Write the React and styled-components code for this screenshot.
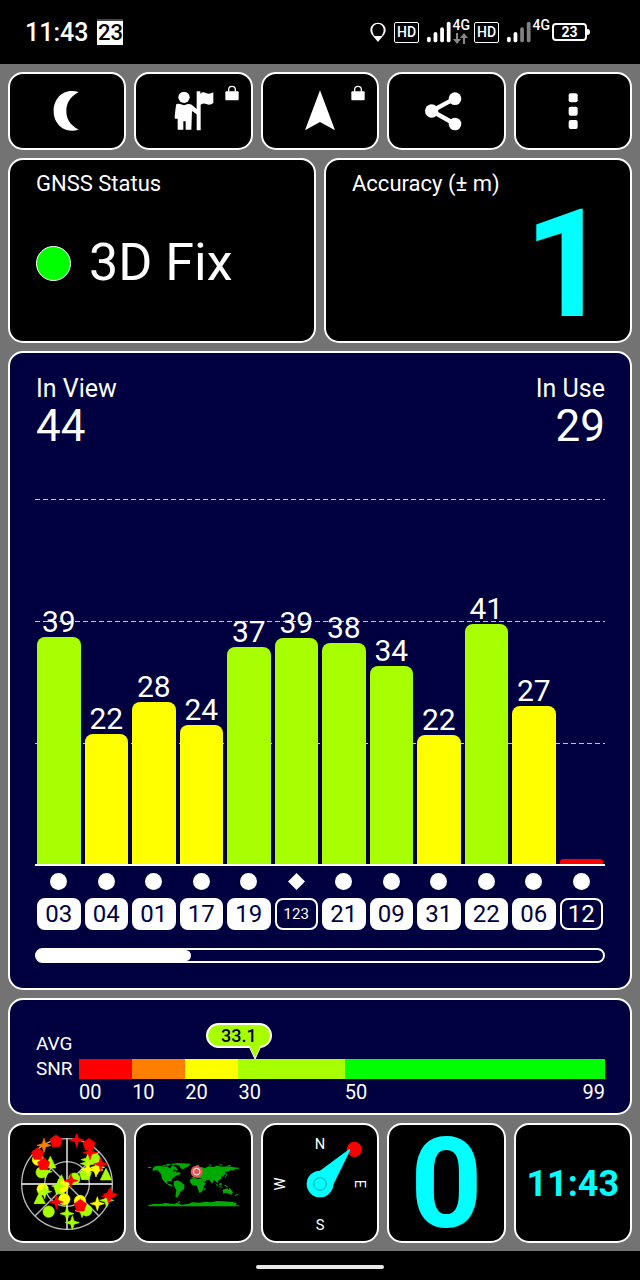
import React from "react";
import styled, { createGlobalStyle } from "styled-components";

const GlobalStyle = createGlobalStyle`
  * { box-sizing: border-box; }
  body {
    margin: 0;
    background: #000;
    color: #fff;
    font-family: Roboto, "Liberation Sans", sans-serif;
  }
  h2, p, ol { margin: 0; padding: 0; font-weight: 400; }
  ol { list-style: none; }
`;

const NAVY = "#000040";
const LIME = "#a8ff00";
const YELLOW = "#ffff00";
const RED = "#ff0000";
const GREEN = "#00ff00";
const CYAN = "#00ffff";

/* ---------- status bar ---------- */

const StatusBar = styled.header`
  display: flex;
  align-items: center;
  justify-content: space-between;
  height: 64px;
  padding: 0 50px 0 25px;
`;

const StatusGroup = styled.div`
  display: flex;
  align-items: center;
  gap: ${(p) => p.$gap}px;
`;

const Clock = styled.time`
  padding-top: 2px;
  font-size: 25px;
  font-weight: 500;
  line-height: 30px;
`;

const DateBadge = styled.span`
  width: 26px;
  height: 26px;
  border-top: 2px solid #444;
  background: #fff;
  color: #000;
  font-size: 22px;
  font-weight: 500;
  line-height: 24px;
  text-align: center;
`;

const HdBadge = styled.span`
  width: 25px;
  height: 21px;
  border: 1px solid #fff;
  border-radius: 2px;
  font-size: 14px;
  font-weight: 500;
  line-height: 19px;
  text-align: center;
`;

const Network = styled.span`
  display: flex;
  gap: 1px;
  width: 43px;
  height: 24px;
`;

const NetworkType = styled.span`
  display: flex;
  flex-direction: column;
  gap: 2px;
  font-size: 14px;
  font-weight: 500;
  line-height: 11px;
`;

const BatteryBox = styled.span`
  display: flex;
  align-items: center;
  &::after {
    content: "";
    width: 3px;
    height: 6px;
    border-radius: 0 3px 3px 0;
    background: #fff;
  }
`;

const BatteryLevel = styled.span`
  width: 35px;
  height: 18px;
  border: 2px solid #fff;
  border-radius: 4px;
  font-size: 14px;
  font-weight: 700;
  line-height: 15px;
  text-align: center;
`;

/* ---------- page ---------- */

const Main = styled.main`
  display: flex;
  flex-direction: column;
  gap: 8px;
  padding: 8px;
  background: #737373;
`;

const TileRow = styled.div`
  display: grid;
  grid-template-columns: repeat(${(p) => p.$columns}, minmax(0, 1fr));
  gap: 8px;
`;

const Tile = styled.button`
  position: relative;
  display: flex;
  align-items: center;
  justify-content: center;
  height: ${(p) => (p.$tall ? 120 : 78)}px;
  padding: ${(p) => (p.$tall ? "2px 0 0" : "0")};
  border: 2px solid #fff;
  border-radius: 15px;
  background: #000;
  color: ${CYAN};
  font-family: inherit;
  font-weight: 700;
  font-size: ${(p) => p.$size || 36}px;
  line-height: 1;
  cursor: pointer;
`;

const LockBadge = styled.svg`
  position: absolute;
  top: 11px;
  right: 12px;
`;

const Panel = styled.section`
  border: 2px solid #fff;
  border-radius: 15px;
  background: ${(p) => (p.$navy ? NAVY : "#000")};
`;

const InfoPanel = styled(Panel)`
  display: flex;
  flex-direction: column;
  height: 185px;
  padding: 11px 20px 9px 26px;
`;

const InfoTitle = styled.h2`
  font-size: 22px;
  line-height: 26px;
`;

const FixState = styled.p`
  display: flex;
  flex: 1;
  align-items: center;
  gap: 18px;
  padding-bottom: 3px;
  font-size: 52px;
  line-height: 60px;
`;

const FixLight = styled.span`
  width: 35px;
  height: 35px;
  border: 1px solid #fff;
  border-radius: 50%;
  background: ${GREEN};
`;

const AccuracyValue = styled.p`
  display: flex;
  flex: 1;
  align-items: center;
  justify-content: flex-end;
  color: ${CYAN};
  font-size: 150px;
  font-weight: 700;
  line-height: 110px;
`;

/* ---------- satellite chart ---------- */

const ChartPanel = styled(Panel)`
  padding: 22px 25px 25px;
`;

const Counts = styled.div`
  display: flex;
  justify-content: space-between;
  padding-left: 1px;
`;

const Count = styled.div`
  text-align: ${(p) => p.$align || "left"};
`;

const CountTitle = styled.h2`
  font-size: 25px;
  line-height: 28px;
`;

const CountValue = styled.p`
  font-size: 44px;
  line-height: 46px;
`;

const dashes = "repeating-linear-gradient(90deg, #c4c4d4 0 5px, transparent 5px 8px)";

const Plot = styled.ol`
  display: grid;
  grid-template-columns: repeat(12, minmax(0, 1fr));
  align-items: end;
  height: 417px;
  border-bottom: 2px solid #fff;
  background-image: ${dashes}, ${dashes}, ${dashes};
  background-size: 100% 1px;
  background-repeat: no-repeat;
  background-position: 0 50px, 0 172px, 0 294px;
`;

const PlotColumn = styled.li`
  padding: 0 2px;
  font-size: 30px;
  line-height: 30px;
  text-align: center;
`;

const Bar = styled.div`
  border-radius: ${(p) => (p.$low ? "3px 3px 0 0" : "8px 8px 0 0")};
  background: ${(p) => p.$color};
`;

const Satellites = styled.ol`
  display: grid;
  grid-template-columns: repeat(12, minmax(0, 1fr));
  padding: 7px 0 18px;
`;

const Satellite = styled.li`
  display: flex;
  flex-direction: column;
  align-items: center;
  gap: 8px;
  padding: 0 2px;
`;

const SatelliteId = styled.span`
  width: 100%;
  height: 32px;
  border: 2px solid #fff;
  border-radius: 8px;
  background: ${(p) => (p.$used ? "#fff" : NAVY)};
  color: ${(p) => (p.$used ? NAVY : "#fff")};
  font-size: ${(p) => (p.$small ? 15 : 24)}px;
  line-height: 29px;
  text-align: center;
`;

const ScrollTrack = styled.div`
  height: 15px;
  border: 2px solid #fff;
  border-radius: 8px;
`;

const ScrollFill = styled.div`
  height: 11px;
  border-radius: 0 6px 6px 0;
  background: #fff;
`;

/* ---------- average SNR ---------- */

const SnrPanel = styled(Panel)`
  display: flex;
  align-items: flex-end;
  gap: 5px;
  height: 117px;
  padding: 0 25px 8px 26px;
`;

const SnrTitle = styled.h2`
  width: 38px;
  padding-bottom: 24px;
  font-size: 19px;
  line-height: 25px;
`;

const SnrGauge = styled.div`
  flex: 1;
`;

const SnrMarker = styled.output`
  display: flex;
  flex-direction: column;
  width: 66px;
  margin-bottom: -1px;
`;

const SnrBubble = styled.span`
  height: 25px;
  border: 2px solid #fff;
  border-radius: 13px;
  background: ${LIME};
  color: ${NAVY};
  font-size: 18px;
  font-weight: 500;
  line-height: 21px;
  text-align: center;
`;

const SnrTail = styled.svg`
  align-self: flex-end;
  margin: -2px 10px 0 0;
`;

const scaleColumns = "10fr 10fr 10fr 20fr 49fr";

const SnrScale = styled.div`
  display: grid;
  grid-template-columns: ${scaleColumns};
  height: 20px;
`;

const SnrZone = styled.span`
  background: ${(p) => p.$color};
`;

const SnrTicks = styled.div`
  display: grid;
  grid-template-columns: ${scaleColumns};
  font-size: 20px;
  line-height: 26px;
`;

const SnrTick = styled.span`
  display: flex;
  justify-content: space-between;
`;

/* ---------- navigation bar ---------- */

const NavBar = styled.footer`
  display: flex;
  justify-content: center;
  height: 29px;
  padding-top: 14px;
`;

const NavPill = styled.span`
  width: 20%;
  height: 4px;
  border-radius: 2px;
  background: #e8e8e8;
`;

/* ---------- icons ---------- */

const Lock = () => (
  <LockBadge width="14" height="16" viewBox="0 0 42 48" fill="#fff" aria-hidden="true">
    <path d="M11 20v-6a10 10 0 0 1 20 0v6" fill="none" stroke="#fff" strokeWidth="4" />
    <rect x="1" y="19" width="40" height="27" rx="3" />
  </LockBadge>
);

const Signal = ({ level }) => (
  <svg width="26" height="24" viewBox="0 0 26 24" aria-hidden="true">
    {[[0, 17], [7, 12], [14, 7], [21, 1]].map(([x, y], i) => (
      <rect key={x} x={x} y={y} width="4" height={23 - y} rx="2" fill={i < level ? "#fff" : "#808080"} />
    ))}
  </svg>
);

const Moon = () => (
  <svg width="50" height="50" viewBox="126 258 150 150" fill="#fff" aria-hidden="true">
    <path d="M236 276C187 262 160 300 161 333C160 368 190 403 236 389C208 374 199 354 199 333C199 311 209 291 236 276Z" />
  </svg>
);

const Guide = () => (
  <svg width="50" height="50" viewBox="506 258 150 150" fill="#fff" aria-hidden="true">
    <circle cx="551" cy="292" r="17" />
    <path d="M528 312Q536 310 542 313Q551 318 560 313Q567 311 574 314L589 327V274H600V281Q608 273 618 280Q628 284 639 277V309Q629 317 618 312Q609 308 601 314V391H589V343L575 333L573 389H556V364H549V389H532V356H524L523 351Q526 320 528 312Z" />
  </svg>
);

const Arrow = () => (
  <svg width="50" height="50" viewBox="885 258 150 150" fill="#fff" aria-hidden="true">
    <path d="M960 271L1005 391L960 366L915 391Z" />
  </svg>
);

const Share = () => (
  <svg width="50" height="50" viewBox="303 258 150 150" fill="#fff" aria-hidden="true">
    <path d="M405 295L335 333L405 372" fill="none" stroke="#fff" strokeWidth="13" />
    <circle cx="335" cy="333" r="20" />
    <circle cx="405" cy="296" r="19" />
    <circle cx="405" cy="372" r="19" />
  </svg>
);

const Dots = () => (
  <svg width="50" height="50" viewBox="683 258 150 150" fill="#fff" aria-hidden="true">
    <rect x="745" y="280" width="27" height="27" rx="6" />
    <rect x="745" y="320" width="27" height="27" rx="6" />
    <rect x="745" y="360" width="27" height="27" rx="6" />
  </svg>
);

const shapes = {
  circle: <circle r="17" />,
  star: <path d="M0-21L5-5L21 0L5 5L0 21L-5 5L-21 0L-5-5Z" />,
  pentagon: <path d="M0-18L18-5L11 17H-11L-18-5Z" />,
  triangle: <path d="M0-19L17 16H-17Z" />,
};

const sky = [
  ["circle", LIME, 125, 170], ["circle", YELLOW, 114, 132], ["star", "#ff8000", 132, 89],
  ["pentagon", RED, 168, 76], ["pentagon", RED, 113, 114], ["triangle", LIME, 151, 141],
  ["star", LIME, 136, 168], ["pentagon", RED, 131, 145], ["star", RED, 230, 73],
  ["pentagon", RED, 267, 86], ["circle", LIME, 283, 129], ["star", LIME, 264, 132],
  ["star", LIME, 262, 144], ["star", RED, 270, 111], ["pentagon", LIME, 256, 175],
  ["star", YELLOW, 264, 161], ["star", YELLOW, 288, 163], ["star", YELLOW, 293, 155],
  ["star", RED, 302, 145], ["triangle", LIME, 318, 177], ["circle", LIME, 223, 189],
  ["triangle", LIME, 184, 196], ["pentagon", LIME, 180, 218], ["circle", YELLOW, 188, 213],
  ["star", LIME, 176, 211], ["star", RED, 213, 195], ["circle", YELLOW, 128, 221],
  ["star", LIME, 134, 228], ["triangle", LIME, 119, 248], ["circle", YELLOW, 193, 251],
  ["star", RED, 169, 259], ["circle", LIME, 146, 288], ["star", LIME, 201, 294],
  ["star", LIME, 217, 321], ["circle", YELLOW, 240, 256], ["circle", LIME, 259, 284],
  ["star", LIME, 246, 285], ["pentagon", RED, 241, 269], ["star", YELLOW, 292, 264],
  ["star", LIME, 320, 254], ["star", RED, 326, 242], ["star", RED, 331, 236],
];

const SkyView = () => (
  <svg width="100" height="100" viewBox="51 55 300 300" aria-hidden="true">
    <g fill="none" stroke="#bbb" strokeWidth="4">
      <circle cx="201" cy="205" r="136" />
      <circle cx="201" cy="205" r="67" />
      <path d="M105 109L297 301M297 109L105 301" />
      <path d="M65 205H337M201 69V341" stroke="#fff" />
    </g>
    {sky.map(([shape, color, x, y], i) => (
      <g key={i} fill={color} stroke={color} strokeWidth="2" transform={`translate(${x} ${y})`}>{shapes[shape]}</g>
    ))}
  </svg>
);

const WorldMap = () => (
  <svg width="100" height="100" viewBox="431 55 300 300" fill="#00aa00" aria-hidden="true">
    <path d="M457 160L463 152L478 150L490 153L500 152L508 157L517 153L526 155L533 162L527 165L522 160L518 168L526 166L530 171L537 169L542 175L532 179L526 181L518 187L513 192L516 199L511 196L500 196L501 204L510 205L517 211L520 213L511 212L498 204L490 196L484 187L483 177L474 165L466 163L457 167Z" />
    <path d="M484 150L495 147L504 144L512 146L503 151L497 149L490 153ZM509 152L520 151L531 157L524 157ZM512 145L532 142L570 144L566 152L557 155L548 161L541 158L537 150L528 147L516 148ZM443 154H453V157H443Z" />
    <path d="M522 196L530 197L536 200L530 200L521 198ZM520 198L532 194L543 200L553 208L550 222L540 229L535 238L531 246L525 244L528 224L521 210Z" />
    <path d="M571 186L579 184L580 177L588 172L596 169L594 160L604 154L614 158L624 152L638 154L651 150L667 153L686 152L700 155L717 156L716 159L704 160L701 165L693 163L681 168L674 168L677 174L671 178L669 184L664 181L662 189L654 195L652 203L645 197L641 193L635 204L627 193L619 193L614 199L608 198L604 189L593 187L586 184L578 188Z" />
    <path d="M570 190L582 187L594 190L604 190L609 199L617 202L611 211L609 221L603 230L597 232L592 218L589 210L576 208L569 200ZM614 216L617 219L613 225L611 221ZM644 202L651 206L656 213L652 212ZM658 202L665 203L662 211L656 208ZM669 207L677 209L684 214L677 213ZM667 222L675 219L681 218L684 222L688 217L694 224L698 231L693 237L685 234L677 231L669 234ZM710 234L714 236L705 242L703 241ZM656 212L667 214V216L657 215ZM677 173L681 178L674 187L672 185L677 180Z" />
    <path d="M575 164L580 164L582 173L576 174ZM587 149L598 147L596 151H588ZM626 145L634 148L629 151ZM657 146H665V149H657ZM682 149H692V151H682Z" />
    <path d="M444 272V268L462 264L481 265L495 262L520 265L532 261L536 256L540 257L534 264L545 267L566 264L575 260L596 261L615 258L633 260L650 256L670 257L698 259L710 263L706 269L717 269V272Z" />
    <circle cx="589" cy="168" r="18" fill="#e95555" />
    <circle cx="589" cy="168" r="10" fill="none" stroke="#fff" strokeWidth="3" />
  </svg>
);

const CompassText = styled.text`
  fill: #fff;
  font-size: 44px;
  font-weight: 400;
  text-anchor: middle;
`;

const Compass = () => (
  <svg width="100" height="100" viewBox="45 55 300 300">
    <CompassText x="195" y="100">N</CompassText>
    <CompassText x="195" y="343">S</CompassText>
    <CompassText transform="translate(300 205) rotate(90)">E</CompassText>
    <CompassText transform="translate(91 205) rotate(-90)">W</CompassText>
    <circle cx="298" cy="101" r="23" fill={RED} />
    <path d="M195 165L283 100L286 103L233 211Z" fill={CYAN} />
    <circle cx="195" cy="205" r="40" fill={CYAN} />
    <circle cx="195" cy="205" r="19" fill="none" stroke="#00a6a6" strokeWidth="3" />
  </svg>
);

/* ---------- data ---------- */

const satellites = [
  { id: "03", snr: 39, height: 227, used: true },
  { id: "04", snr: 22, height: 130, used: true },
  { id: "01", snr: 28, height: 162, used: true },
  { id: "17", snr: 24, height: 139, used: true },
  { id: "19", snr: 37, height: 217, used: true },
  { id: "123", snr: 39, height: 226, diamond: true },
  { id: "21", snr: 38, height: 221, used: true },
  { id: "09", snr: 34, height: 198, used: true },
  { id: "31", snr: 22, height: 129, used: true },
  { id: "22", snr: 41, height: 240, used: true },
  { id: "06", snr: 27, height: 158, used: true },
  { id: "12", snr: null, height: 5 },
];

const barColor = (snr) => (snr === null ? RED : snr < 30 ? YELLOW : LIME);

const tools = [
  { name: "Night mode", Icon: Moon },
  { name: "Guide", Icon: Guide, locked: true },
  { name: "Navigate", Icon: Arrow, locked: true },
  { name: "Share", Icon: Share },
  { name: "More", Icon: Dots },
];

const AVERAGE = 33.1;

export default function App() {
  return (
    <>
      <GlobalStyle />
      <StatusBar>
        <StatusGroup $gap={9}>
          <Clock>11:43</Clock>
          <DateBadge>23</DateBadge>
        </StatusGroup>
        <StatusGroup $gap={8}>
          <svg width="16" height="20" viewBox="0 0 48 60" aria-hidden="true">
            <path d="M24 2C10 2 1 12 1 24C1 38 15 47 24 60C33 47 47 38 47 24C47 12 38 2 24 2ZM24 6C34 6 41 14 41 24C41 32 36 40 34 42H14C12 40 7 32 7 24C7 14 14 6 24 6Z" fill="#fff" fillRule="evenodd" />
          </svg>
          <HdBadge>HD</HdBadge>
          <StatusGroup $gap={4}>
            <Network>
              <Signal level={4} />
              <NetworkType>
                4G
                <svg width="15" height="11" viewBox="0 0 15 11" fill="#888" aria-hidden="true">
                  <path d="M3 0H5V6H8L4 11L0 6H3ZM10 11H12V5H15L11 0L7 5H10Z" />
                </svg>
              </NetworkType>
            </Network>
            <HdBadge>HD</HdBadge>
          </StatusGroup>
          <StatusGroup $gap={2}>
            <Network>
              <Signal level={2} />
              <NetworkType>4G</NetworkType>
            </Network>
            <BatteryBox>
              <BatteryLevel>23</BatteryLevel>
            </BatteryBox>
          </StatusGroup>
        </StatusGroup>
      </StatusBar>

      <Main>
        <TileRow $columns={5}>
          {tools.map(({ name, Icon, locked }) => (
            <Tile key={name} type="button" aria-label={name}>
              <Icon />
              {locked && <Lock />}
            </Tile>
          ))}
        </TileRow>

        <TileRow $columns={2}>
          <InfoPanel>
            <InfoTitle>GNSS Status</InfoTitle>
            <FixState>
              <FixLight />
              3D Fix
            </FixState>
          </InfoPanel>
          <InfoPanel>
            <InfoTitle>Accuracy (± m)</InfoTitle>
            <AccuracyValue>1</AccuracyValue>
          </InfoPanel>
        </TileRow>

        <ChartPanel $navy>
          <Counts>
            <Count>
              <CountTitle>In View</CountTitle>
              <CountValue>44</CountValue>
            </Count>
            <Count $align="right">
              <CountTitle>In Use</CountTitle>
              <CountValue>29</CountValue>
            </Count>
          </Counts>
          <Plot>
            {satellites.map((s) => (
              <PlotColumn key={s.id}>
                {s.snr}
                <Bar $color={barColor(s.snr)} $low={s.snr === null} style={{ height: s.height }} />
              </PlotColumn>
            ))}
          </Plot>
          <Satellites>
            {satellites.map((s) => (
              <Satellite key={s.id}>
                <svg width="17" height="17" viewBox="0 0 17 17" fill="#fff" aria-hidden="true">
                  {s.diamond ? <path d="M8.5 0L17 8.5L8.5 17L0 8.5Z" /> : <circle cx="8.5" cy="8.5" r="8.5" />}
                </svg>
                <SatelliteId $used={s.used} $small={s.id.length > 2}>{s.id}</SatelliteId>
              </Satellite>
            ))}
          </Satellites>
          <ScrollTrack>
            <ScrollFill style={{ width: `${(12 / 44) * 100}%` }} />
          </ScrollTrack>
        </ChartPanel>

        <SnrPanel $navy>
          <SnrTitle>AVG SNR</SnrTitle>
          <SnrGauge>
            <SnrMarker style={{ marginLeft: `calc(${(AVERAGE / 99) * 100}% - 49px)` }}>
              <SnrBubble>{AVERAGE}</SnrBubble>
              <SnrTail width="14" height="14" viewBox="0 0 14 14" aria-hidden="true">
                <path d="M1 0L7 13L13 0" fill={LIME} stroke="#fff" strokeWidth="1" />
              </SnrTail>
            </SnrMarker>
            <SnrScale>
              {[RED, "#ff8000", YELLOW, LIME, GREEN].map((c) => (
                <SnrZone key={c} $color={c} />
              ))}
            </SnrScale>
            <SnrTicks>
              <SnrTick>00</SnrTick>
              <SnrTick>10</SnrTick>
              <SnrTick>20</SnrTick>
              <SnrTick>30</SnrTick>
              <SnrTick>
                <span>50</span>
                <span>99</span>
              </SnrTick>
            </SnrTicks>
          </SnrGauge>
        </SnrPanel>

        <TileRow $columns={5}>
          <Tile $tall type="button" aria-label="Sky view"><SkyView /></Tile>
          <Tile $tall type="button" aria-label="World map"><WorldMap /></Tile>
          <Tile $tall type="button" aria-label="Compass"><Compass /></Tile>
          <Tile $tall $size={126} type="button">0</Tile>
          <Tile $tall type="button">11:43</Tile>
        </TileRow>
      </Main>

      <NavBar>
        <NavPill />
      </NavBar>
    </>
  );
}
